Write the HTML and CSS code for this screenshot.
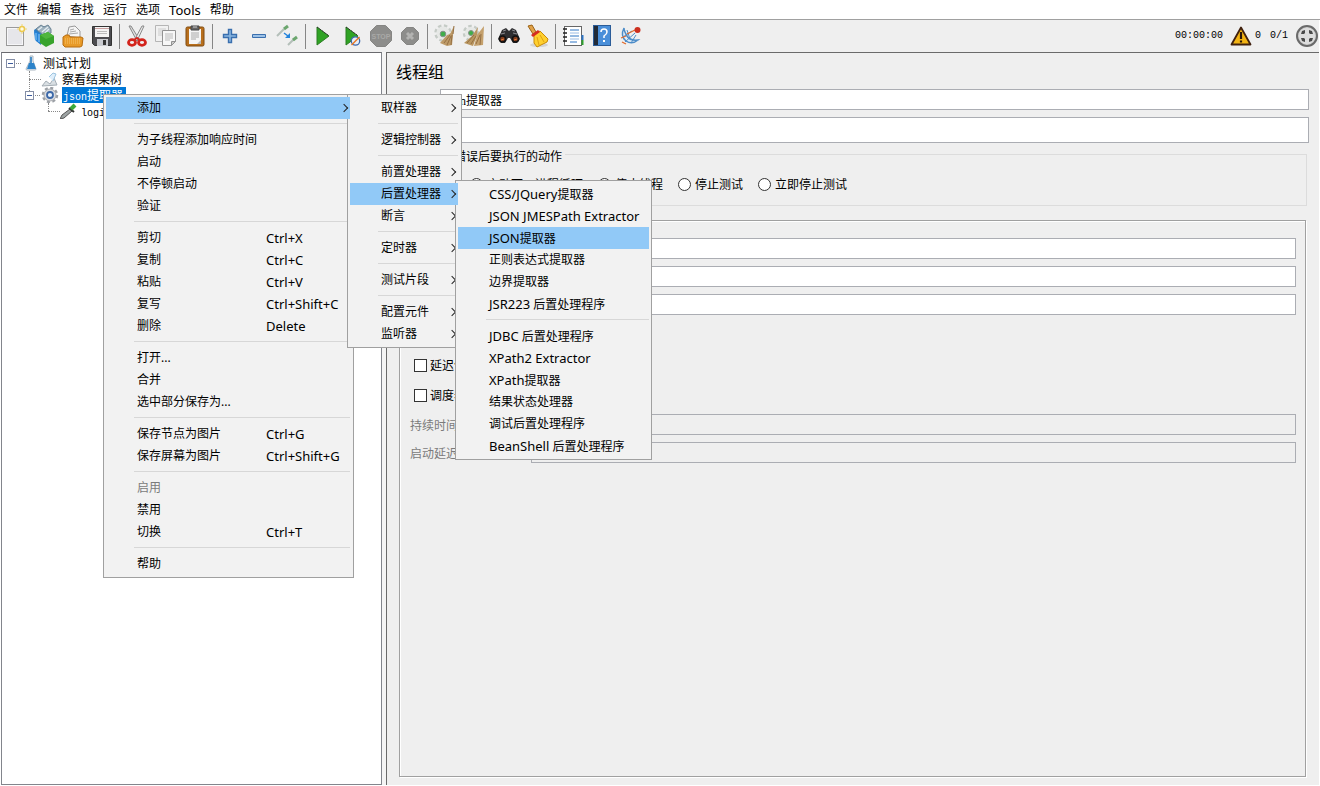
FILE: index.html
```html
<!DOCTYPE html>
<html lang="zh-CN">
<head>
  <meta charset="UTF-8">
  <meta name="viewport" content="width=device-width, initial-scale=1.0">
  <title>Apache JMeter</title>
  <link rel="stylesheet" href="styles.css">
</head>
<body>
  <!-- Menu bar -->
  <nav class="menubar">
    <button>文件</button>
    <button>编辑</button>
    <button>查找</button>
    <button>运行</button>
    <button>选项</button>
    <button class="latin">Tools</button>
    <button>帮助</button>
  </nav>

  <!-- Toolbar -->
  <header class="toolbar">
    <div class="tools">
      <button aria-label="新建">
        <svg viewBox="0 0 24 24"><rect x="3.500" y="3.500" width="17" height="18" fill="#f6f6f8" stroke="#9a9a9a"/><path d="M5 5h14v15H5z" fill="#e6e6ea"/><circle cx="19" cy="5" r="2.500" fill="#fffbe0" stroke="#ecc94e" stroke-width="1.500"/><path d="M19 0v2M19 8v2M14 5h2M22 5h2" stroke="#f0d878"/></svg>
      </button>
      <button aria-label="模板">
        <svg viewBox="0 0 24 24"><path d="M2 6l6-4 10 1-1 6-7 3-1 9-5-4z" fill="#2b7cc4"/><path d="M4 5l5-4 3 2 4-2 3 4v4l-8 2z" fill="#9fb2be" stroke="#6d8595"/><path d="M6 6l4-3M10 8l6-5M13 9l4-4" stroke="#e3edf2" stroke-width="1.300"/><path d="M2 7l7 3v10l-6-4z" fill="#2482d8"/><path d="M4 9v7M7 10v8" stroke="#8ccaf5"/><path d="M8 11l8-3 6 4v7l-8 4-6-4z" fill="#38a32c"/><path d="M8 11l8-3 6 4-8 3z" fill="#4fb63e"/></svg>
      </button>
      <button aria-label="打开">
        <svg viewBox="0 0 24 24"><path d="M6 12l2-9 6-1 5 5v7z" fill="#f5f5f5" stroke="#999"/><path d="M9 6l4-1M9 8l6-1M8 10l9-1" stroke="#aaa"/><path d="M2 13l3-2h3l1 2h11l2 1-1 8-2 1H4l-2-2z" fill="#e89a28" stroke="#b76d10"/><path d="M4 15h15M4 17h15M4 19h15" stroke="#f7c46b" stroke-dasharray="1 1"/></svg>
      </button>
      <button aria-label="保存">
        <svg viewBox="0 0 24 24"><path d="M2.500 2.500h19v19h-17l-2-2z" fill="#4c4c50" stroke="#333"/><rect x="5" y="3" width="14" height="10" fill="#f4f4f4"/><path d="M5 4.500h14" stroke="#c9a0a0"/><path d="M7 7.500h10M7 9.500h10" stroke="#bbb"/><rect x="7" y="15" width="11" height="7" fill="#c9cbd0"/><rect x="13" y="16" width="3" height="5" fill="#333"/></svg>
      </button>
      <hr>
      <button aria-label="剪切">
        <svg viewBox="0 0 24 24"><path d="M4 2l2 0 8 13-2 2z" fill="#ddd" stroke="#888"/><path d="M19 2l-2 0-7 13 2 2z" fill="#eee" stroke="#888"/><ellipse cx="7" cy="18.500" rx="3.500" ry="2.800" fill="none" stroke="#d3241c" stroke-width="2.800"/><ellipse cx="17" cy="18.500" rx="3.500" ry="2.800" fill="none" stroke="#d3241c" stroke-width="2.800"/><path d="M9 16l3-2 3 2" stroke="#d3241c" stroke-width="2" fill="none"/></svg>
      </button>
      <button aria-label="复制">
        <svg viewBox="0 0 24 24"><path d="M1.500 1.500h13v16h-13z" fill="#f1f1f1" stroke="#b5b5b5"/><path d="M4 5h8M4 7h8M4 9h8M4 11h4" stroke="#ccc"/><path d="M8.500 6.500h13v11l-4 4h-9z" fill="#f7f7f7" stroke="#929292"/><path d="M11 10h8M11 12h8M11 14h8M11 16h5" stroke="#bbb"/><path d="M21.500 17.500h-4v4z" fill="#ccc" stroke="#929292"/></svg>
      </button>
      <button aria-label="粘贴">
        <svg viewBox="0 0 24 24"><rect x="3" y="3" width="18" height="19" rx="1.500" fill="#b86f1c" stroke="#7f4a10"/><path d="M6 5h12v15H6z" fill="#f5f5f5"/><path d="M8 9h8M8 11h8M8 13h8M8 15h5" stroke="#aaa"/><path d="M18 16l-4 4h4z" fill="#bbb"/><path d="M8 2h8v4H8z" fill="#666" stroke="#444"/><path d="M10 3h4" stroke="#ccc"/></svg>
      </button>
      <hr>
      <button aria-label="展开">
        <svg viewBox="0 0 24 24"><path d="M10.500 5.500h3v5h5v3h-5v5h-3v-5h-5v-3h5z" fill="#8ab6e0" stroke="#3a6fae" stroke-width="1.400"/></svg>
      </button>
      <button aria-label="折叠">
        <svg viewBox="0 0 24 24"><path d="M5.500 10.500h13v3h-13z" fill="#9cc1e6" stroke="#3a6fae"/></svg>
      </button>
      <button aria-label="切换">
        <svg viewBox="0 0 24 24"><path d="M1 12l7-7" stroke="#b4bfb9" stroke-width="2"/><path d="M8 5l4-3" stroke="#6ba66e" stroke-width="3"/><path d="M12 21l6-6" stroke="#b4bfb9" stroke-width="2"/><path d="M17 16l4-3" stroke="#6ba66e" stroke-width="3"/><path d="M8 9l4 3" stroke="#2484dc" stroke-width="1.500"/><path d="M14 9v5H9z" fill="#2484dc"/></svg>
      </button>
      <hr>
      <button aria-label="启动">
        <svg viewBox="0 0 24 24"><path d="M6 3l12 9-12 9z" fill="#2fa324" stroke="#2b7d22"/><path d="M6 3l12 9" stroke="#333" stroke-dasharray="2 1"/></svg>
      </button>
      <button aria-label="不停顿启动">
        <svg viewBox="0 0 24 24"><path d="M6 3l12 9-12 9z" fill="#2fa324" stroke="#2b7d22"/><path d="M6 3l11 8" stroke="#333" stroke-dasharray="2 1"/><circle cx="15.500" cy="17" r="4.200" fill="#e6eef8" stroke="#3c68ad" stroke-width="1.300"/><path d="M11.500 21l8-8" stroke="#e87722" stroke-width="1.500"/></svg>
      </button>
      <button aria-label="停止" disabled>
        <svg viewBox="0 0 24 24"><path d="M7.500 1.500h9l6 6v9l-6 6h-9l-6-6v-9z" fill="#8d8d8b" stroke="#858583"/><text x="12" y="15" class="stop-text">STOP</text></svg>
      </button>
      <button aria-label="关闭" disabled>
        <svg viewBox="0 0 24 24"><path d="M8.500 3.500h7l5 5v7l-5 5h-7l-5-5v-7z" fill="#8d8d8b" stroke="#858583"/><path d="M9 9l6 6M15 9l-6 6" stroke="#b3b3b1" stroke-width="3"/></svg>
      </button>
      <hr>
      <button aria-label="清除">
        <svg viewBox="0 0 24 24"><circle cx="10" cy="9" r="7.500" fill="none" stroke="#c5cbc6" stroke-width="2.500" stroke-dasharray="3.500 2.500"/><circle cx="10" cy="9" r="6.500" fill="#e6e8e6"/><circle cx="10" cy="10" r="2.800" fill="#3fae49" stroke="#87928a"/><path d="M21 2l-1 9-1 10-5 1-7-3 7-8 3-1z" fill="#bd9a68"/><path d="M11 19l6-8M14 21l4-9M18 21l1-10M20 10l1-8" stroke="#967043"/></svg>
      </button>
      <button aria-label="清除全部">
        <svg viewBox="0 0 24 24"><circle cx="9" cy="9" r="7" fill="none" stroke="#c5cbc6" stroke-width="2.500" stroke-dasharray="3.500 2.500"/><circle cx="9" cy="9" r="6" fill="#e6e8e6"/><circle cx="9" cy="9" r="2.500" fill="#3fae49" stroke="#87928a"/><path d="M16 3l-1 8-4 11-9-3 8-7z" fill="#b99660"/><path d="M22 2l-1 19-9 1 3-11z" fill="#c4a06c"/><path d="M5 19l7-8M9 20l5-8M14 20l4-9M18 21l1-11" stroke="#967043"/></svg>
      </button>
      <hr>
      <button aria-label="查找">
        <svg viewBox="0 0 24 24"><path d="M5 6l4-2 3 3 3-3 4 2 4 9-3 4h-4l-3-5h-2l-3 5H4l-3-4z" fill="#2e2e30"/><path d="M6 7l3-1M15 6l3 1M4 10l4-1M16 9l4 1" stroke="#8b8b90"/><circle cx="5.500" cy="15" r="3" fill="#7d3a1b" stroke="#111" stroke-width="1.500"/><circle cx="18.500" cy="15" r="3" fill="#7d3a1b" stroke="#111" stroke-width="1.500"/><path d="M4 16l3-1M17 16l3-1" stroke="#e2793a"/></svg>
      </button>
      <button aria-label="重置查找">
        <svg viewBox="0 0 24 24"><ellipse cx="13" cy="21" rx="9" ry="2" fill="#d4d4d4"/><path d="M2 2l4-1 4 7-3 2z" fill="#e0a24a" stroke="#9b6315"/><path d="M8 11l6-4 8 8-1 3-10 5-3-4z" fill="#ffd02e" stroke="#c98a08"/><path d="M11 13l2 8M14 11l4 7" stroke="#e0a312"/><path d="M5 11l7-5 2 2-7 5z" fill="#d62d20"/></svg>
      </button>
      <hr>
      <button aria-label="函数助手">
        <svg viewBox="0 0 24 24"><rect x="3.500" y="2.500" width="17" height="19" fill="#fff" stroke="#666"/><path d="M9 6h9M9 12h9M9 18h7" stroke="#2d74c4"/><path d="M9 9h9M9 15h9" stroke="#9bbce4"/><path d="M2 5h4M2 9h4M2 13h4M2 17h4" stroke="#222" stroke-width="1.500"/><path d="M21.500 11v5" stroke="#2d74c4" stroke-width="2"/><path d="M21.500 16v5" stroke="#2ea12e" stroke-width="2"/></svg>
      </button>
      <button aria-label="帮助">
        <svg viewBox="0 0 24 24"><rect x="3.500" y="1.500" width="17" height="20" fill="#4a8fd9" stroke="#2b5c98"/><path d="M4 2h4v19H4z" fill="#222b38"/><path d="M11 8q0-3 3-3t3 3q0 2-3 4v2" fill="none" stroke="#fff" stroke-width="1.500"/><path d="M13 17h2" stroke="#fff" stroke-width="2"/></svg>
      </button>
      <button aria-label="收集">
        <svg viewBox="0 0 24 24"><path d="M5 4q-4 8 2 13 6 4 12-1-8 1-11-4t-3-8z" fill="#e4eef7" stroke="#4c8cc8" stroke-width="1.500"/><path d="M4 13l9-6M6 18l10-9M12 19l5-8M8 6l3 9" stroke="#4c8cc8"/><path d="M2 14l5-2M3 18l4 2M8 10l8-4" stroke="#e06a2b" stroke-width="1.300"/><circle cx="18.500" cy="6" r="3" fill="#cc2f1e"/></svg>
      </button>
    </div>
    <div class="status">
      <output>00:00:00</output>
      <button aria-label="日志">
        <svg viewBox="0 0 22 20"><path d="M11 1.500L20.500 18.500h-19z" fill="#f3b414" stroke="#40210f" stroke-width="1.800" stroke-linejoin="round"/><path d="M11 6v7" stroke="#2a1608" stroke-width="2.200"/><path d="M11 14.500v2" stroke="#2a1608" stroke-width="2.200"/></svg>
      </button>
      <output class="errors">0</output>
      <output class="threads">0/1</output>
      <svg class="wheel" viewBox="0 0 24 24"><circle cx="12" cy="12" r="10" fill="#cfcfcf" stroke="#6a6a6a" stroke-width="2"/><circle cx="12" cy="12" r="8" fill="#dedede"/><path d="M6 10l1-3 3-1v3l-1 1zM18 10l-1-3-3-1v3l1 1zM6 14l1 3 3 1v-3l-1-1zM18 14l-1 3-3 1v-3l1-1z" fill="#4a4a4a"/></svg>
    </div>
  </header>

  <main class="workspace">
    <!-- Test plan tree -->
    <aside class="tree">
      <div class="node">
        <i class="handle"></i>
        <svg viewBox="0 0 18 16"><path d="M8 1h3v5l3 8q0 1-1 1H5q-1 0-1-1l4-8z" fill="#e5eef5" stroke="#a9b5bf"/><path d="M7 8h5l2 6H5z" fill="#2d83c9"/><path d="M9 2v6" stroke="#4a90c8" stroke-width="2"/></svg>
        <span>测试计划</span>
      </div>
      <ul>
        <li>
          <div class="node">
            <i class="branch"></i>
            <svg viewBox="0 0 18 16"><path d="M1 15l4-5 4 3 4-6 3 7z" fill="#d9dfe3" stroke="#a4adb4"/><path d="M8 6l4-4 3 1-3 7" fill="#dfeefa" stroke="#9cc4e0"/></svg>
            <span>察看结果树</span>
          </div>
        </li>
        <li>
          <div class="node">
            <i class="handle"></i>
            <svg viewBox="0 0 18 16"><circle cx="9" cy="8" r="7" fill="none" stroke="#9b9fa5" stroke-width="2.500" stroke-dasharray="3 2.500"/><circle cx="9" cy="8" r="6" fill="#d9dbde" stroke="#a9acb0"/><circle cx="9" cy="8" r="3" fill="#e9f1fa" stroke="#3c68a8" stroke-width="1.800"/></svg>
            <span class="selected"><b>json</b>提取器</span>
          </div>
          <ul>
            <li>
              <div class="node">
                <i class="branch"></i>
                <svg viewBox="0 0 18 16"><path d="M0 16l2-4 8-6 2 2-8 7z" fill="#9da3a3" stroke="#555"/><path d="M9 5l5 4" stroke="#333" stroke-width="2"/><path d="M11 6l4-4" stroke="#3aa83a" stroke-width="4"/></svg>
                <span><b>login</b></span>
              </div>
            </li>
          </ul>
        </li>
      </ul>
    </aside>

    <!-- Thread group settings -->
    <form class="editor">
      <h1>线程组</h1>
      <div class="head-row">
        <label for="name">名称：</label>
        <input type="text" id="name" value="json提取器">
      </div>
      <div class="head-row">
        <label for="comment">注释：</label>
        <input type="text" id="comment" class="tall">
      </div>

      <fieldset class="on-error">
        <legend>在取样器错误后要执行的动作</legend>
        <div class="radios">
          <label><input type="radio" name="action">继续</label>
          <label><input type="radio" name="action">启动下一进程循环</label>
          <label><input type="radio" name="action">停止线程</label>
          <label><input type="radio" name="action">停止测试</label>
          <label><input type="radio" name="action">立即停止测试</label>
        </div>
      </fieldset>

      <section class="properties" aria-label="线程属性">
        <div class="fields">
          <label for="threads">线程数：</label>
          <input type="text" id="threads">
          <label for="ramp">Ramp-Up：</label>
          <input type="text" id="ramp">
          <label for="loops">循环次数</label>
          <input type="text" id="loops">
        </div>
        <div class="checks">
          <label><input type="checkbox">每次迭代使用同一用户</label>
          <label><input type="checkbox">延迟创建线程直到需要</label>
          <label><input type="checkbox">调度器</label>
        </div>
        <div class="fields off">
          <label for="duration">持续时间（秒）</label>
          <input type="text" id="duration" disabled>
          <label for="delay">启动延迟（秒）</label>
          <input type="text" id="delay" disabled>
        </div>
      </section>
    </form>
  </main>

  <!-- Context menu and its two open submenus -->
  <div class="popup popup-node" role="menu">
    <button class="active more">添加</button>
    <hr>
    <button>为子线程添加响应时间</button>
    <button>启动</button>
    <button>不停顿启动</button>
    <button>验证</button>
    <hr>
    <button>剪切<kbd>Ctrl+X</kbd></button>
    <button>复制<kbd>Ctrl+C</kbd></button>
    <button>粘贴<kbd>Ctrl+V</kbd></button>
    <button>复写<kbd>Ctrl+Shift+C</kbd></button>
    <button>删除<kbd>Delete</kbd></button>
    <hr>
    <button>打开...</button>
    <button>合并</button>
    <button>选中部分保存为...</button>
    <hr>
    <button>保存节点为图片<kbd>Ctrl+G</kbd></button>
    <button>保存屏幕为图片<kbd>Ctrl+Shift+G</kbd></button>
    <hr>
    <button disabled>启用</button>
    <button>禁用</button>
    <button>切换<kbd>Ctrl+T</kbd></button>
    <hr>
    <button>帮助</button>
  </div>

  <div class="popup popup-add" role="menu">
    <button class="more">取样器</button>
    <hr>
    <button class="more">逻辑控制器</button>
    <hr>
    <button class="more">前置处理器</button>
    <button class="active more">后置处理器</button>
    <button class="more">断言</button>
    <hr>
    <button class="more">定时器</button>
    <hr>
    <button class="more">测试片段</button>
    <hr>
    <button class="more">配置元件</button>
    <button class="more">监听器</button>
  </div>

  <div class="popup popup-post" role="menu">
    <button><span class="latin">CSS/JQuery</span>提取器</button>
    <button><span class="latin">JSON JMESPath Extractor</span></button>
    <button class="active"><span class="latin">JSON</span>提取器</button>
    <button>正则表达式提取器</button>
    <button>边界提取器</button>
    <button><span class="latin">JSR223</span> 后置处理程序</button>
    <hr>
    <button><span class="latin">JDBC</span> 后置处理程序</button>
    <button><span class="latin">XPath2 Extractor</span></button>
    <button><span class="latin">XPath</span>提取器</button>
    <button>结果状态处理器</button>
    <button>调试后置处理程序</button>
    <button><span class="latin">BeanShell</span> 后置处理程序</button>
  </div>
</body>
</html>
```

FILE: styles.css
```css
* {
  box-sizing: border-box;
}

body {
  margin: 0;
  height: 100vh;
  display: flex;
  flex-direction: column;
  background-color: #fff;
  color: #000;
  font-family: "Noto Sans", "Noto Sans CJK SC", sans-serif;
  font-size: 12px;
  line-height: 16px;
  overflow: hidden;
}

button {
  padding: 0;
  border: none;
  background: none;
  color: inherit;
  font: inherit;
}

hr {
  margin: 0;
  border: none;
}

.latin {
  font-size: 13px;
}

/* Menu bar */
.menubar {
  display: flex;
  gap: 9px;
  height: 20px;
  padding-left: 4px;
  border-bottom: 1px solid #a0a0a0;
}

/* Toolbar */
.toolbar {
  display: flex;
  justify-content: space-between;
  align-items: center;
  height: 32px;
  margin-right: 1px;
  background-color: #efefef;
}

.tools,
.status {
  display: flex;
  align-items: center;
}

.tools button {
  width: 29px;
  height: 24px;
}

.tools svg {
  display: block;
  width: 24px;
  height: 24px;
  margin: 0 auto;
}

.tools hr {
  width: 1px;
  height: 25px;
  margin: 0 2px 0 3px;
  background-color: #868686;
}

.stop-text {
  fill: #a9a9a7;
  font: bold 7px "Liberation Sans", sans-serif;
  text-anchor: middle;
}

.status {
  font-family: "Liberation Mono", monospace;
  font-size: 10px;
}

.status button {
  margin: 0 3px 0 7px;
}

.status button svg {
  display: block;
  width: 22px;
  height: 20px;
}

.threads {
  margin: 0 7px 0 9px;
}

.wheel {
  width: 24px;
  height: 24px;
}

/* Panes */
.workspace {
  flex: 1;
  display: flex;
  gap: 4px;
  min-height: 0;
  margin: 0 1px 1px;
  background-color: #f4f4f4;
}

.tree {
  flex: 0 0 381px;
  padding-top: 2px;
  border: 1px solid #82858c;
  border-top-color: #6a6a6e;
  background-color: #fff;
  font-family: "Noto Sans CJK SC", sans-serif;
}

.tree ul {
  position: relative;
  margin: 0;
  padding-left: 19px;
  list-style: none;
}

/* Dotted trunk running down to the last child */
.tree ul::before {
  content: "";
  position: absolute;
  top: 0;
  left: 27px;
  height: 24px;
  border-left: 1px dotted #888;
}

.tree ul ul::before {
  height: 8px;
}

.node {
  position: relative;
  display: flex;
  align-items: center;
  height: 16px;
  padding-left: 4px;
}

.node svg {
  width: 18px;
  height: 16px;
  margin-right: 3px;
}

.node b {
  font: 10px "Liberation Mono", monospace;
}

.handle {
  width: 9px;
  height: 9px;
  margin-right: 7px;
  border: 1px solid #848ea6;
  background: linear-gradient(#3c5a9c, #3c5a9c) center / 5px 1px no-repeat #fff;
}

.handle::after {
  content: "";
  position: absolute;
  top: 8px;
  left: 14px;
  width: 5px;
  border-top: 1px dotted #888;
}

.branch {
  width: 12px;
  margin-left: 4px;
  border-top: 1px dotted #888;
}

.selected {
  padding: 0 3px 0 1px;
  background-color: #0078d7;
  color: #fff;
}

/* Editor */
.editor {
  flex: 1;
  display: flex;
  flex-direction: column;
  min-width: 0;
  padding: 8px 10px 8px 9px;
  border-top: 1px solid #6a6a6a;
  border-left: 1px solid #6a6a6a;
  background-color: #efefef;
  font-family: "Noto Sans CJK SC", sans-serif;
}

.editor h1 {
  margin: 0 0 8px;
  font-size: 16px;
  font-weight: normal;
  line-height: 20px;
}

.head-row {
  display: grid;
  grid-template-columns: 44px 1fr;
  align-items: center;
  margin-bottom: 7px;
}

input[type="text"] {
  width: 100%;
  height: 21px;
  padding: 0 5px;
  border: 1px solid #abadb3;
  border-radius: 0;
  background-color: #fff;
  font-family: "Liberation Serif", "Noto Sans CJK SC", serif;
  font-size: 12px;
}

input[type="text"].tall {
  height: 26px;
}

input[type="text"]:disabled {
  background-color: #efefef;
}

input[type="radio"],
input[type="checkbox"] {
  appearance: none;
  width: 13px;
  height: 13px;
  margin: 0 4px 0 0;
  border: 1px solid #333;
  background-color: #fff;
}

input[type="radio"] {
  border-radius: 50%;
}

.on-error {
  margin: -3px 2px 0 0;
  padding: 13px 17px 12px;
  border: 1px solid #dcdcdc;
}

.on-error legend {
  margin-left: -10px;
  padding: 3px 3px 0 2px;
  line-height: 12px;
}

.radios {
  display: flex;
  gap: 15px;
  height: 18px;
}

.radios label,
.checks label {
  display: flex;
  align-items: center;
}

.properties {
  flex: 1;
  margin: 14px 3px 0;
  padding: 17px 9px 0 10px;
  border: 1px solid #a0a0a0;
  box-shadow: 1px 1px 0 #fff, inset 1px 1px 0 #fff;
}

.fields {
  display: grid;
  grid-template-columns: 121px 1fr;
  align-items: center;
  row-gap: 7px;
}

.off {
  color: #7b7b7b;
}

.checks {
  padding: 5px 4px 4px;
}

.checks label {
  height: 30px;
}

.checks input {
  margin-right: 3px;
}

/* Popup menus */
.popup {
  position: absolute;
  padding: 2px;
  border: 1px solid #a0a0a0;
  background-color: #f2f2f2;
}

.popup-node {
  top: 94px;
  left: 103px;
  width: 251px;
  padding-right: 3px;
}

.popup-add {
  top: 94px;
  left: 347px;
  width: 115px;
  padding-right: 3px;
}

.popup-post {
  top: 180px;
  left: 455px;
  width: 197px;
}

.popup button {
  display: block;
  position: relative;
  width: 100%;
  height: 22px;
  padding-left: 31px;
  line-height: 22px;
  text-align: left;
  white-space: nowrap;
}

.popup-node button {
  display: grid;
  grid-template-columns: 129px 1fr;
}

.popup button:disabled {
  color: #7b7b7b;
}

/* The open entry stays painted over the edge of its submenu */
.popup .active {
  z-index: 1;
  background-color: #91c9f7;
}

.popup kbd {
  font: inherit;
  font-size: 13px;
}

.popup hr {
  height: 1px;
  margin: 4px 0 5px 28px;
  background-color: #d7d7d7;
}

.more::after {
  content: "";
  position: absolute;
  top: 8px;
  right: 3px;
  width: 5px;
  height: 5px;
  border-top: 1px solid #222;
  border-right: 1px solid #222;
  transform: rotate(45deg);
}
```
